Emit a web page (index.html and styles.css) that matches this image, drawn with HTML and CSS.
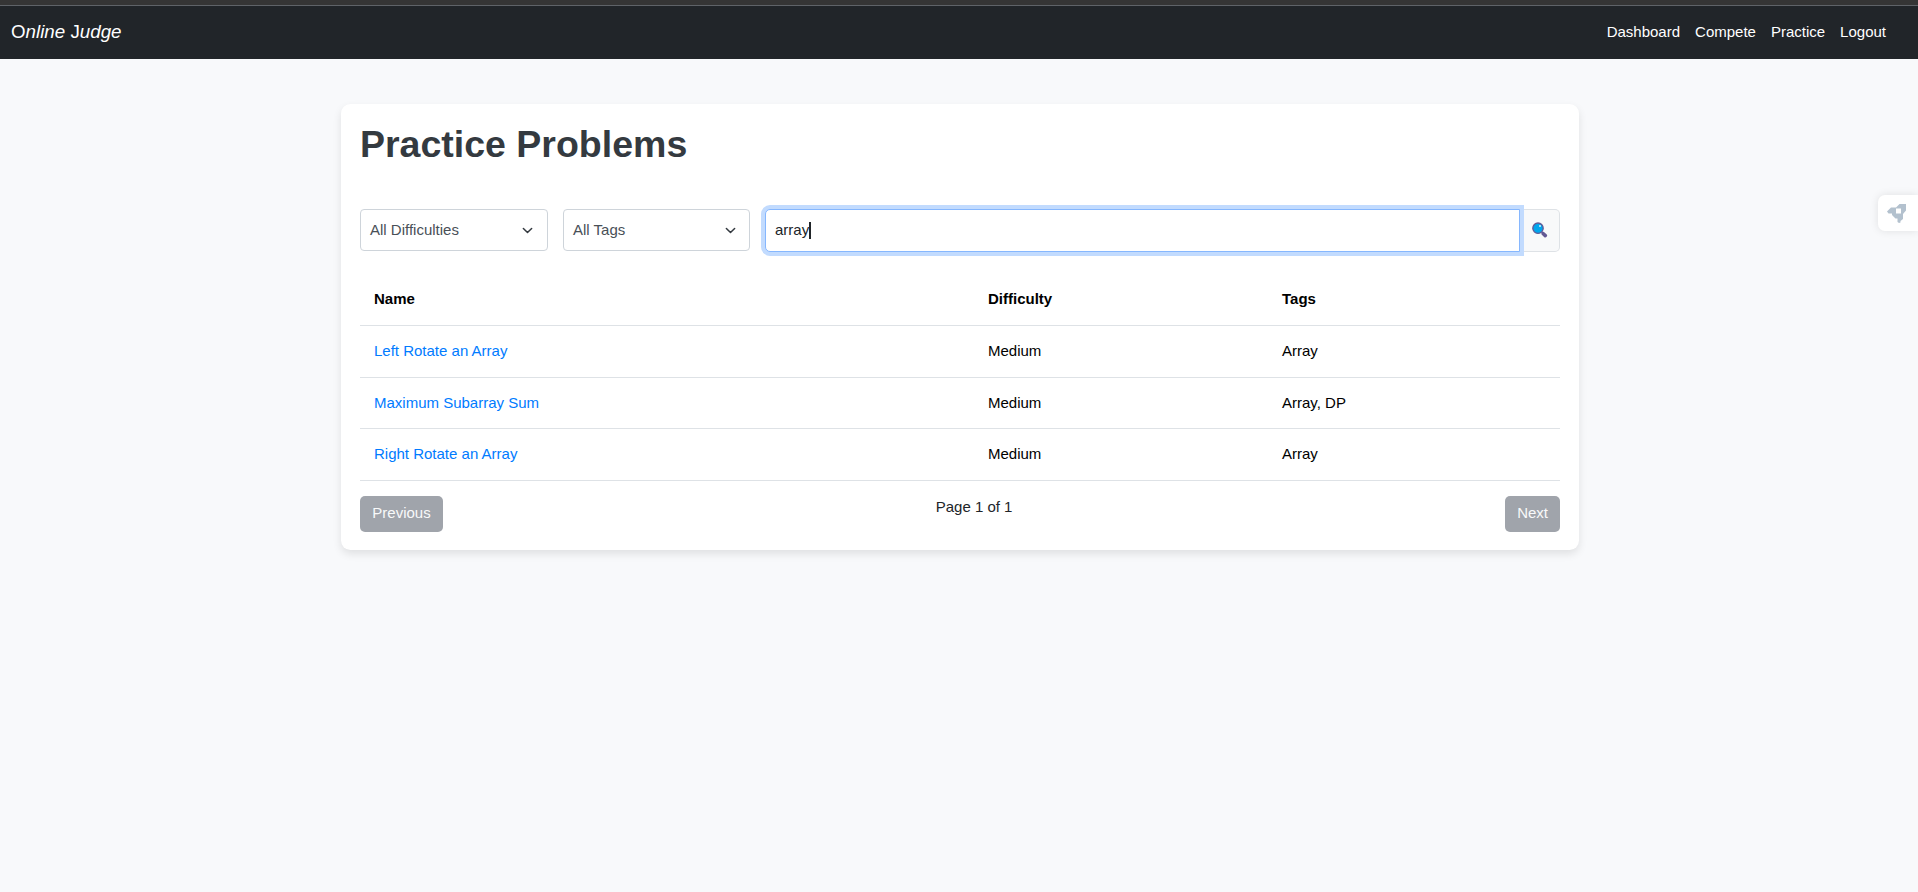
FILE: index.html
```html
<!DOCTYPE html>
<html lang="en">
<head>
<meta charset="utf-8">
<title>Online Judge</title>
<link rel="stylesheet" href="styles.css">
</head>
<body>
<div class="topstrip"></div>
<nav class="navbar">
  <a class="brand">O<i>nline</i> J<i>udge</i></a>
  <div class="links"><a>Dashboard</a><a>Compete</a><a>Practice</a><a>Logout</a></div>
</nav>
<main class="card">
  <h1>Practice Problems</h1>
  <div class="filters">
    <div class="select first">All Difficulties
      <svg class="chevron" viewBox="0 0 16 16"><path d="m2 5 6 6 6-6"/></svg></div>
    <div class="select">All Tags
      <svg class="chevron" viewBox="0 0 16 16"><path d="m2 5 6 6 6-6"/></svg></div>
    <div class="search">
      <div class="field">array<span class="caret"></span></div>
      <div class="addon">
        <svg class="lens" viewBox="0 0 16 16"><path d="M9.800 10l1.500 1.500" stroke="#635994" stroke-width="2"/><path d="M11.300 11.700l2 1.900" stroke="#635994" stroke-width="3.600" stroke-linecap="round"/><circle cx="6" cy="6.200" r="5.200" fill="#00a6ed" stroke="#635994" stroke-width="1.300"/><circle cx="8" cy="4" r="1" fill="#d3f1ff"/></svg>
      </div>
    </div>
  </div>
  <table class="problems">
    <thead><tr><th class="name">Name</th><th class="difficulty">Difficulty</th><th>Tags</th></tr></thead>
    <tbody>
      <tr><td><a>Left Rotate an Array</a></td><td>Medium</td><td>Array</td></tr>
      <tr class="short"><td><a>Maximum Subarray Sum</a></td><td>Medium</td><td>Array, DP</td></tr>
      <tr><td><a>Right Rotate an Array</a></td><td>Medium</td><td>Array</td></tr>
    </tbody>
  </table>
  <div class="pager">
    <button class="btn previous" disabled>Previous</button>
    <span class="count">Page 1 of 1</span>
    <button class="btn" disabled>Next</button>
  </div>
</main>
<div class="side-tab">
  <svg class="rocket" viewBox="0 0 19 19"><path fill-rule="evenodd" d="M12.500 0H19v6.500L16 10v5L13.500 17v1.500L12 19l-1.500-1V14.500H8.500L5 11V9.500H1.500L0 7.500 4 3.500h5zM9 4.500v5h5v-5z"/></svg>
</div>
</body>
</html>
```
FILE: styles.css
```css
* { box-sizing: border-box; }
html { background: #f8f9fb; }
body {
  margin: 0;
  min-height: 100vh;
  font: 15px/22.5px "Liberation Sans", Arial, sans-serif;
  color: #212529;
}
.topstrip { height: 6px; background: #353535; border-bottom: 1px solid #5f6368; }
.navbar {
  height: 53px;
  padding: 0 32px 0 11px;
  background: #212529;
  color: #fff;
  display: flex;
  align-items: center;
  justify-content: space-between;
}
.brand { font-size: 18.75px; line-height: 28px; margin-top: -2px; }
.links { display: flex; gap: 15px; }
.card {
  width: 1238px;
  height: 446px;
  margin: 45px 0 0 341px;
  padding: 18px 19px 0;
  background: #fff;
  border-radius: 9.4px;
  box-shadow: 0 4px 8px rgba(0, 0, 0, .1);
}
h1 { margin: 0; font-size: 37.5px; line-height: 45px; color: #343a40; }
.filters { display: flex; margin-top: 42px; height: 43px; }
.select {
  width: 187px;
  height: 42px;
  margin-right: 15px;
  padding: 0 13px 0 9px;
  border: 1px solid #ced4da;
  border-radius: 4px;
  color: #495057;
  display: flex;
  align-items: center;
  justify-content: space-between;
}
.select.first { width: 188px; padding-right: 14px; }
.chevron { width: 11px; height: 11px; fill: none; stroke: #343a40; stroke-width: 2.2; stroke-linecap: round; stroke-linejoin: round; }
.search { flex: 1; display: flex; }
.field {
  flex: 1;
  position: relative;
  z-index: 1;
  display: flex;
  align-items: center;
  padding: 0 9px;
  background: #fff;
  border: 1px solid #86b7fe;
  border-radius: 5px 0 0 5px;
  box-shadow: 0 0 0 4px #c2dbfe;
}
.caret { width: 2px; height: 17px; background: #212529; }
.addon {
  width: 40px;
  display: flex;
  align-items: center;
  padding-left: 12px;
  background: #f8f9fa;
  border: 1px solid #dee2e6;
  border-left: 0;
  border-radius: 0 5px 5px 0;
}
.lens { width: 16px; height: 16px; margin-top: -2px; fill: none; }
.problems {
  width: 1200px;
  margin-top: 22px;
  border-collapse: separate;
  border-spacing: 0;
  table-layout: fixed;
  color: #000;
}
th, td { height: 52px; padding: 0 14px; text-align: left; border-bottom: 1px solid #dee2e6; }
.short td { height: 51px; }
.name { width: 614px; }
.difficulty { width: 294px; }
.problems a { color: #007bff; }
.pager { display: flex; justify-content: space-between; margin-top: 15px; }
.btn {
  height: 36px;
  padding: 0 12px 2px;
  border: 0;
  border-radius: 5px;
  background: #a0a4ab;
  color: #f8f9fa;
  font: 15px/22px "Liberation Sans", Arial, sans-serif;
}
.previous { width: 83px; }
.count { line-height: 22px; }
.side-tab {
  position: absolute;
  top: 195px;
  right: 0;
  width: 40px;
  height: 36px;
  padding: 9px;
  background: #fff;
  border-radius: 7px 0 0 7px;
  box-shadow: 0 0 8px rgba(0, 0, 0, .1);
}
.rocket { display: block; width: 19px; height: 19px; fill: #b3c1ce; }
```
